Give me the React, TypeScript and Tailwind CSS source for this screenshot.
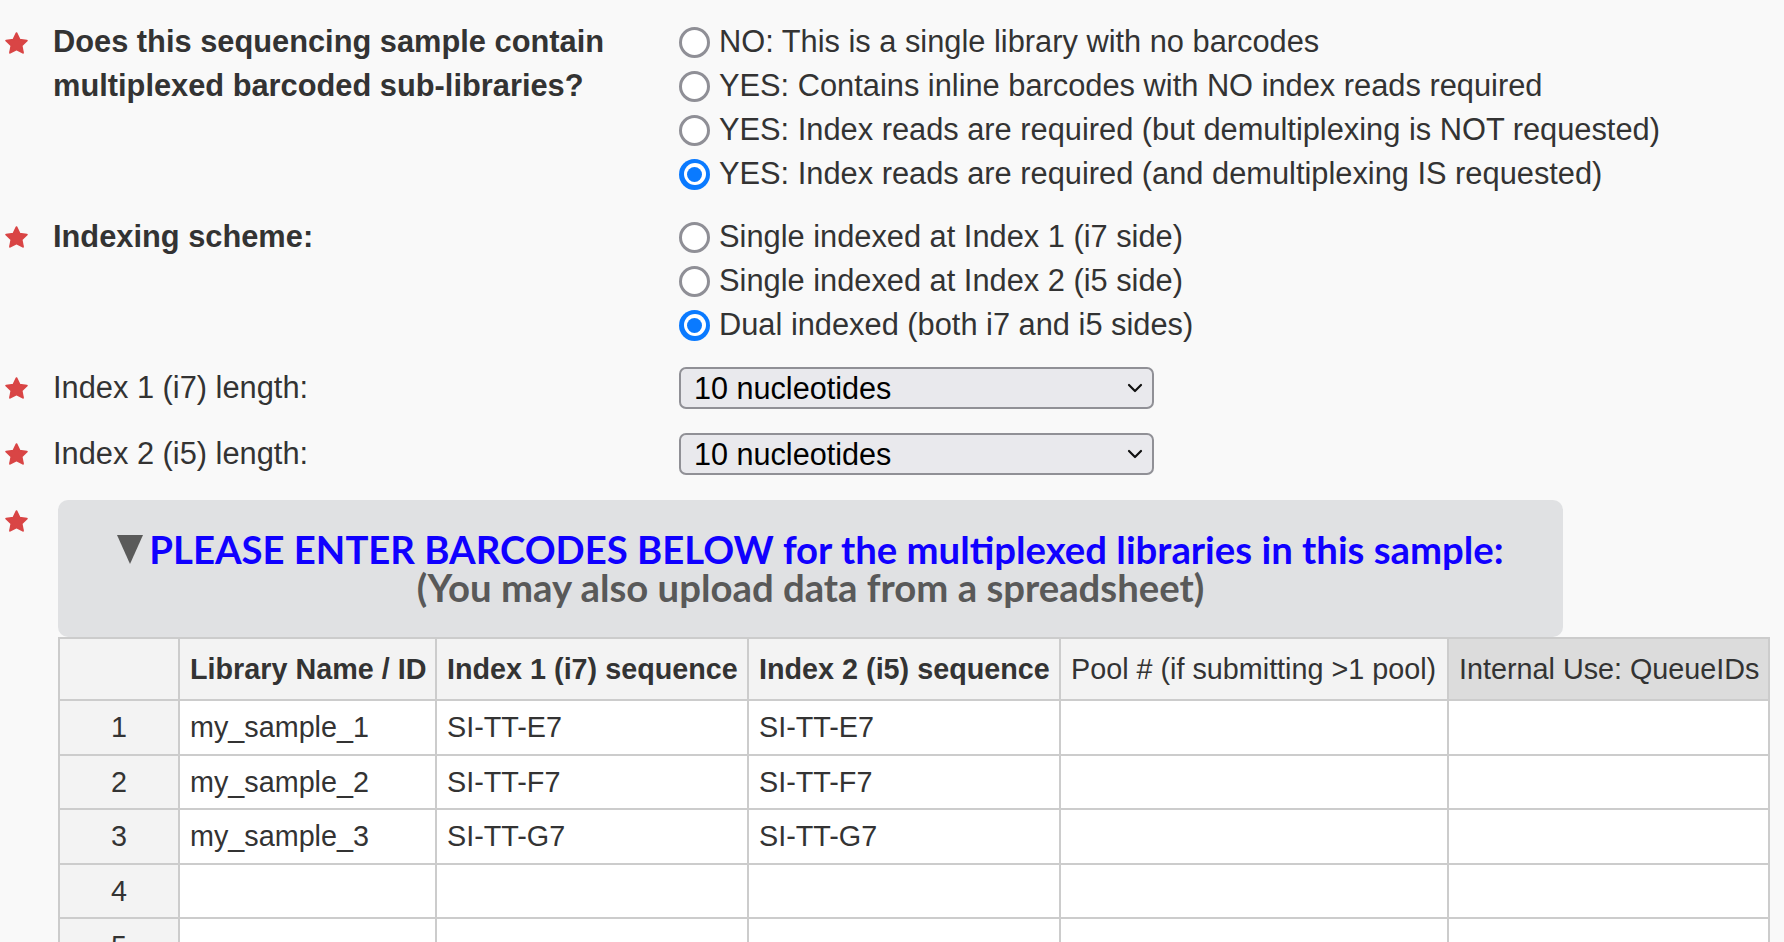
import React from 'react';

const Star: React.FC<{ className?: string }> = ({ className }) => (
  <svg className={`w-[25px] h-[24px] ${className ?? ''}`} viewBox="0 0 24 23">
    <path
      d="M12 2l3 6.3 6.9.9-5 4.8 1.3 6.9L12 17.6l-6.2 3.3 1.3-6.9-5-4.8 6.9-.9z"
      fill="#d94545"
      stroke="#d94545"
      strokeWidth="1.8"
      strokeLinejoin="round"
      style={{ filter: 'blur(0.5px)' }}
    />
  </svg>
);

const Radio: React.FC<{ checked?: boolean }> = ({ checked }) =>
  checked ? (
    <span className="w-[31px] h-[31px] rounded-full bg-[#0a7aff] flex items-center justify-center shrink-0">
      <span className="w-[22px] h-[22px] rounded-full bg-white flex items-center justify-center">
        <span className="w-[15px] h-[15px] rounded-full bg-[#0a7aff]" />
      </span>
    </span>
  ) : (
    <span className="w-[31px] h-[31px] rounded-full border-[3px] border-[#8f8f96] bg-white shrink-0" />
  );

const RadioList: React.FC<{ options: string[]; selected: number }> = ({ options, selected }) => (
  <div className="flex flex-col">
    {options.map((o, i) => (
      <label key={o} className="flex items-center gap-[9px] h-[44px] text-[#333] whitespace-nowrap">
        <Radio checked={i === selected} />
        <span>{o}</span>
      </label>
    ))}
  </div>
);

const Select: React.FC<{ value: string }> = ({ value }) => (
  <div className="w-[475px] h-[42px] rounded-[7px] border-2 border-[#909096] bg-[#e9e9ed] flex items-center justify-between pl-[13px] pr-[9px] text-[30.6px] text-black">
    <span>{value}</span>
    <svg className="w-[16px] h-[10px]" viewBox="0 0 16 10">
      <path d="M2 2l6 6 6-6" fill="none" stroke="#111" strokeWidth="2.2" strokeLinecap="round" strokeLinejoin="round" />
    </svg>
  </div>
);

const cols = ['', 'Library Name / ID', 'Index 1 (i7) sequence', 'Index 2 (i5) sequence', 'Pool # (if submitting >1 pool)', 'Internal Use: QueueIDs'];
const rows = [
  ['my_sample_1', 'SI-TT-E7', 'SI-TT-E7'],
  ['my_sample_2', 'SI-TT-F7', 'SI-TT-F7'],
  ['my_sample_3', 'SI-TT-G7', 'SI-TT-G7'],
  ['', '', ''],
  ['', '', ''],
  ['', '', ''],
];

const App: React.FC = () => {
  return (
    <div className="h-screen overflow-hidden bg-[#f9f9f9] text-[30.8px] leading-[44px] font-['Liberation_Sans',Arial,sans-serif]">
      <div className="pt-[20px]">
        {/* multiplexed question */}
        <div className="flex items-start">
          <div className="w-[53px] pl-[4px] pt-[11px] shrink-0">
            <Star />
          </div>
          <div className="w-[626px] shrink-0 font-bold text-[#333]">
            Does this sequencing sample contain
            <br />
            multiplexed barcoded sub-libraries?
          </div>
          <RadioList
            options={[
              'NO: This is a single library with no barcodes',
              'YES: Contains inline barcodes with NO index reads required',
              'YES: Index reads are required (but demultiplexing is NOT requested)',
              'YES: Index reads are required (and demultiplexing IS requested)',
            ]}
            selected={3}
          />
        </div>

        {/* indexing scheme */}
        <div className="flex items-start mt-[19px]">
          <div className="w-[53px] pl-[4px] pt-[10px] shrink-0">
            <Star />
          </div>
          <div className="w-[626px] shrink-0 font-bold text-[#333]">Indexing scheme:</div>
          <RadioList
            options={['Single indexed at Index 1 (i7 side)', 'Single indexed at Index 2 (i5 side)', 'Dual indexed (both i7 and i5 sides)']}
            selected={2}
          />
        </div>

        <div className="flex items-center mt-[19px]">
          <div className="w-[53px] pl-[4px] shrink-0 flex">
            <Star />
          </div>
          <div className="w-[626px] shrink-0 text-[#333]">Index 1 (i7) length:</div>
          <Select value="10 nucleotides" />
        </div>

        <div className="flex items-center mt-[22px]">
          <div className="w-[53px] pl-[4px] shrink-0 flex">
            <Star />
          </div>
          <div className="w-[626px] shrink-0 text-[#333]">Index 2 (i5) length:</div>
          <Select value="10 nucleotides" />
        </div>

        {/* barcodes */}
        <div className="flex items-start mt-[24px]">
          <div className="w-[58px] pl-[4px] pt-[9px] shrink-0">
            <Star />
          </div>
          <div className="flex flex-col">
            <div className="w-[1505px] h-[137px] rounded-[10px] bg-[#e0e1e3] flex flex-col items-center justify-center pb-[2px] font-['Lato',sans-serif] font-bold text-[38.3px] leading-[38px]">
              <div className="flex items-center text-[#1000ff]">
                <svg className="w-[26px] h-[29px] mr-[6px] mt-[2px]" viewBox="0 0 26 29">
                  <path d="M0 0h26L13 29z" fill="#5a5a5a" />
                </svg>
                <span>PLEASE ENTER BARCODES BELOW for the multiplexed libraries in this sample:</span>
              </div>
              <div className="text-[#595959]">(You may also upload data from a spreadsheet)</div>
            </div>

            <div className="grid grid-cols-[118px_255px_310px_310px_386px_319px] gap-[2px] bg-[#cccccc] p-[2px] w-[1712px] text-[28.75px] text-[#333]">
              {cols.map((c, i) => (
                <div
                  key={i}
                  className={`h-[60px] flex items-center px-[10px] whitespace-nowrap ${
                    i === 5 ? 'bg-[#dcdcdc]' : 'bg-[#f3f3f3]'
                  } ${i >= 1 && i <= 3 ? 'font-bold' : ''}`}
                >
                  {c}
                </div>
              ))}
              {rows.map((r, ri) => (
                <React.Fragment key={ri}>
                  <div className="h-[52.6px] flex items-center justify-center bg-[#f3f3f3]">{ri + 1}</div>
                  {[...r, '', ''].map((v, ci) => (
                    <div key={ci} className="h-[52.6px] flex items-center px-[10px] bg-white whitespace-nowrap">
                      {v}
                    </div>
                  ))}
                </React.Fragment>
              ))}
            </div>
          </div>
        </div>
      </div>
    </div>
  );
};

export default App;
